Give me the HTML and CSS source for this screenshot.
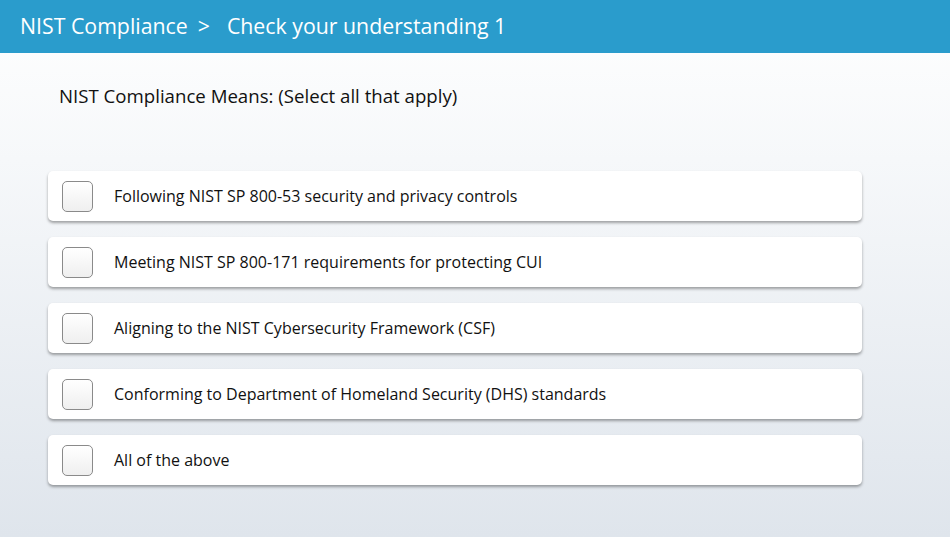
FILE: index.html
```html
<!DOCTYPE html>
<html>
<head>
<meta charset="utf-8">
<link rel="stylesheet" href="styles.css">
</head>
<body>
<header class="topbar">
  <span class="crumb">NIST Compliance</span>
  <span class="sep">&gt;</span>
  <span class="crumb">Check your understanding 1</span>
</header>
<main class="content">
  <h1 class="question">NIST Compliance Means: (Select all that apply)</h1>
  <div class="options">
    <label class="option"><span class="box"></span><span class="text">Following NIST SP 800-53 security and privacy controls</span></label>
    <label class="option"><span class="box"></span><span class="text">Meeting NIST SP 800-171 requirements for protecting CUI</span></label>
    <label class="option"><span class="box"></span><span class="text">Aligning to the NIST Cybersecurity Framework (CSF)</span></label>
    <label class="option"><span class="box"></span><span class="text">Conforming to Department of Homeland Security (DHS) standards</span></label>
    <label class="option"><span class="box"></span><span class="text">All of the above</span></label>
  </div>
</main>
</body>
</html>
```
FILE: styles.css
```css
* { box-sizing: border-box; }
html, body { margin: 0; padding: 0; }
body {
  width: 950px;
  height: 537px;
  overflow: hidden;
  font-family: "Open Sans", "Liberation Sans", sans-serif;
  background: linear-gradient(to bottom, #ffffff 0px, #f6f8fa 160px, #dfe5ec 537px);
  color: #111;
}
.topbar {
  height: 53px;
  background: #2a9ccc;
  color: #fff;
  display: flex;
  align-items: center;
  padding-left: 20px;
  font-size: 21.3px;
  padding-bottom: 2px;
}
.sep { margin: 0 17px 0 10px; }
.content { padding: 0 0 0 48px; }
.question {
  margin: 0;
  padding: 31px 0 0 11px;
  font-size: 18.65px;
  font-weight: 400;
  line-height: 24px;
  color: #111;
}
.options {
  margin-top: 63px;
  width: 814px;
  display: flex;
  flex-direction: column;
  gap: 16px;
}
.option {
  height: 50px;
  background: #fff;
  border-radius: 5px;
  box-shadow: 0 2px 3px rgba(0,0,0,0.35);
  display: flex;
  align-items: center;
  padding-left: 14px;
}
.box {
  width: 31px;
  height: 31px;
  border: 1px solid #8a8a8a;
  border-radius: 5px;
  background: linear-gradient(to bottom, #ffffff, #efefef);
  flex: none;
}
.text {
  margin-left: 21px;
  font-size: 16px;
  color: #111;
}
```
